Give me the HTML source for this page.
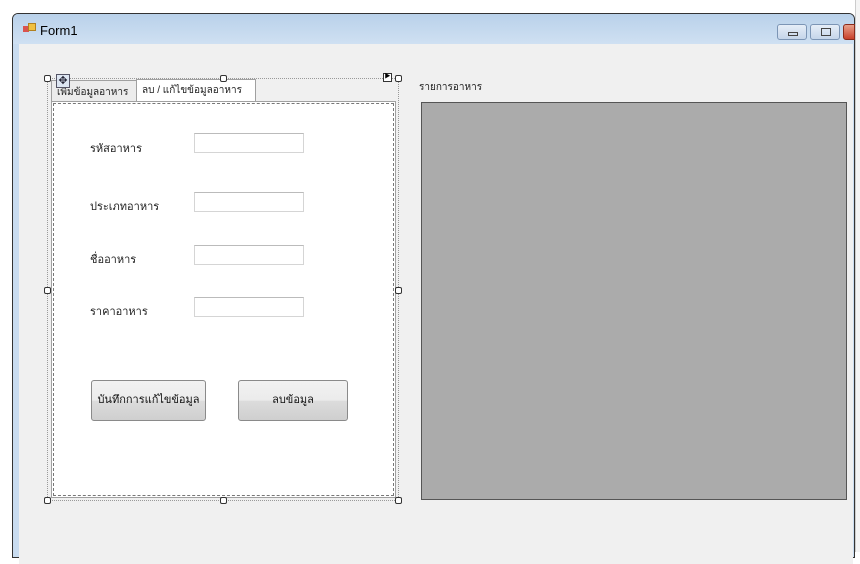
<!DOCTYPE html>
<html><head><style>
body{margin:0;width:860px;height:552px;overflow:hidden;background:#fff;position:relative;font-family:"Liberation Sans","Noto Sans CJK SC",sans-serif;}
div{position:absolute;box-sizing:border-box}
.t{font-size:11px;color:#222;white-space:nowrap;font-family:"Liberation Sans","Noto Sans CJK SC",sans-serif}
.in{background:#fff;border:1px solid #d5d5d5;border-top-color:#bbb;width:110px;height:20px;left:194px}
.h{width:7px;height:7px;border:1px solid #333;background:#fff;border-radius:2px}
.btn{border:1px solid #8a8a8a;border-radius:3px;background:linear-gradient(#f2f2f2 0,#ebebeb 50%,#dcdcdc 51%,#cfcfcf 100%);font-size:11px;text-align:center;color:#111}
</style></head><body>
<div style="left:12px;top:13px;width:843px;height:545px;border:1px solid #333;border-radius:6px 6px 0 0;background:#c9dcf0"></div>
<div style="left:13px;top:14px;width:841px;height:30px;border-radius:5px 5px 0 0;background:linear-gradient(#b9d1ea,#cfe0f2)"></div>
<div style="left:23px;top:26px;width:6px;height:6px;background:#d9534f"></div>
<div style="left:28px;top:23px;width:8px;height:8px;background:#f0c040;border:1px solid #b08020"></div>
<div class="t" style="left:40px;top:23px;font-size:13px;color:#000">Form1</div>
<div style="left:777px;top:24px;width:30px;height:16px;border:1px solid #7c95b5;border-radius:3px;background:linear-gradient(#e6eef8,#c5d5ea)"><div style="left:10px;top:7px;width:10px;height:4px;border:1px solid #444"></div></div>
<div style="left:810px;top:24px;width:30px;height:16px;border:1px solid #7c95b5;border-radius:3px;background:linear-gradient(#e6eef8,#c5d5ea)"><div style="left:10px;top:3px;width:10px;height:8px;border:1px solid #444"></div></div>
<div style="left:843px;top:24px;width:12px;height:16px;border:1px solid #8a2a1a;border-radius:3px 0 0 3px;background:linear-gradient(#e8a08a,#c8402a)"></div>
<div style="left:19px;top:44px;width:834px;height:520px;background:#f0f0f0"></div>
<div style="left:855px;top:0;width:5px;height:552px;background:#f4f4f4;border-left:1px solid #ccc"></div>
<div style="left:47px;top:78px;width:352px;height:423px;border:1px dotted #999"></div>
<div style="left:51px;top:80px;width:86px;height:21px;background:#ececec;border:1px solid #a0a0a0;border-bottom:none"></div>
<div class="t" style="left:57px;top:85px;font-size:10px">เพิ่มข้อมูลอาหาร</div>
<div style="left:136px;top:79px;width:120px;height:23px;background:#fff;border:1px solid #a0a0a0;border-bottom:none"></div>
<div class="t" style="left:142px;top:83px;font-size:10px">ลบ / แก้ไขข้อมูลอาหาร</div>
<div style="left:51px;top:101px;width:345px;height:397px;background:#fff;border:1px solid #a0a0a0"></div>
<div style="left:53px;top:103px;width:341px;height:393px;border:1px dashed #777"></div>
<div style="left:56px;top:74px;width:14px;height:14px;border:1px solid #556;background:#dde6f2;font-size:11px;line-height:12px;text-align:center;color:#223">✥</div>
<div class="h" style="left:44px;top:75px"></div><div class="h" style="left:220px;top:75px"></div><div class="h" style="left:395px;top:75px"></div>
<div class="h" style="left:44px;top:287px"></div><div class="h" style="left:395px;top:287px"></div>
<div class="h" style="left:44px;top:497px"></div><div class="h" style="left:220px;top:497px"></div><div class="h" style="left:395px;top:497px"></div>
<div style="left:383px;top:73px;width:9px;height:9px;border:1px solid #333;background:#fff;font-size:6px;line-height:7px;text-align:center">▶</div>
<div class="t" style="left:90px;top:139px">รหัสอาหาร</div><div class="in" style="top:133px"></div>
<div class="t" style="left:90px;top:197px">ประเภทอาหาร</div><div class="in" style="top:192px"></div>
<div class="t" style="left:90px;top:250px">ชื่ออาหาร</div><div class="in" style="top:245px"></div>
<div class="t" style="left:90px;top:302px">ราคาอาหาร</div><div class="in" style="top:297px"></div>
<div class="btn" style="left:91px;top:380px;width:115px;height:41px;line-height:39px">บันทึกการแก้ไขข้อมูล</div>
<div class="btn" style="left:238px;top:380px;width:110px;height:41px;line-height:39px">ลบข้อมูล</div>
<div class="t" style="left:419px;top:80px;font-size:10px">รายการอาหาร</div>
<div style="left:421px;top:102px;width:426px;height:398px;background:#ababab;border:1px solid #555"></div>
</body></html>
